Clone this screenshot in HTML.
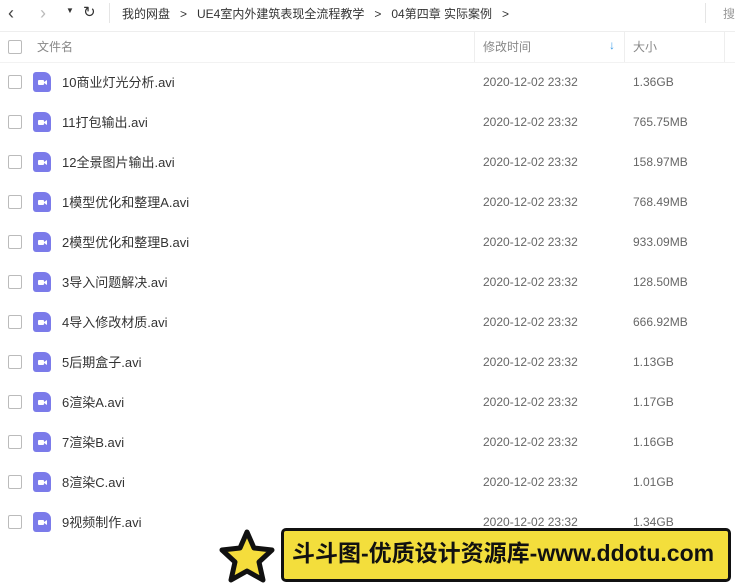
<!DOCTYPE html>
<html><head><meta charset="utf-8"><style>
body{margin:0;width:735px;height:585px;overflow:hidden;background:#fff;font-family:"Liberation Sans","Noto Sans CJK SC",sans-serif;font-size:12px;color:#333;position:relative}
.a{position:absolute;white-space:nowrap}
.cb{position:absolute;left:8px;width:12px;height:12px;border:1px solid #bbb;border-radius:2px;background:#fff}
.ic{position:absolute;left:33px;width:18px;height:20px;background:#7b7bea;border-radius:3px 7px 3px 3px}
.ic:after{content:"";position:absolute;left:5px;top:8px;width:6px;height:5px;background:#fff;border-radius:1px}
.ic:before{content:"";position:absolute;left:11px;top:8px;border-right:3px solid #fff;border-top:2px solid transparent;border-bottom:2px solid transparent;height:1px}
.g{color:#666}
</style></head><body>
<div class="a" style="left:8px;top:3px;font-size:18px;color:#444">‹</div>
<div class="a" style="left:40px;top:3px;font-size:18px;color:#bbb">›</div>
<div class="a" style="left:66px;top:6px;font-size:8px;color:#333">▼</div>
<div class="a" style="left:83px;top:3px;font-size:15px;color:#333">↻</div>
<div class="a" style="left:109px;top:3px;width:1px;height:20px;background:#e5e5e5"></div>
<div class="a" style="left:122px;top:5px;color:#333">我的网盘 &nbsp;&nbsp;&gt; &nbsp;&nbsp;UE4室内外建筑表现全流程教学 &nbsp;&nbsp;&gt; &nbsp;&nbsp;04第四章 实际案例 &nbsp;&nbsp;&gt;</div>
<div class="a" style="left:705px;top:3px;width:1px;height:20px;background:#e5e5e5"></div>
<div class="a" style="left:723px;top:5px;color:#999">搜</div>
<div class="a" style="left:0;top:31px;width:735px;height:1px;background:#eee"></div>
<div class="cb" style="top:40px"></div>
<div class="a g" style="left:37px;top:38px;color:#888">文件名</div>
<div class="a" style="left:474px;top:32px;width:1px;height:30px;background:#eee"></div>
<div class="a" style="left:483px;top:38px;color:#888">修改时间</div>
<div class="a" style="left:609px;top:38px;color:#3b9de8;font-weight:bold">↓</div>
<div class="a" style="left:624px;top:32px;width:1px;height:30px;background:#eee"></div>
<div class="a" style="left:633px;top:38px;color:#888">大小</div>
<div class="a" style="left:724px;top:32px;width:1px;height:30px;background:#eee"></div>
<div class="a" style="left:0;top:62px;width:735px;height:1px;background:#f2f2f2"></div>
<div id="rows"></div>
<script>
var d=[["10商业灯光分析.avi","1.36GB"],["11打包输出.avi","765.75MB"],["12全景图片输出.avi","158.97MB"],["1模型优化和整理A.avi","768.49MB"],["2模型优化和整理B.avi","933.09MB"],["3导入问题解决.avi","128.50MB"],["4导入修改材质.avi","666.92MB"],["5后期盒子.avi","1.13GB"],["6渲染A.avi","1.17GB"],["7渲染B.avi","1.16GB"],["8渲染C.avi","1.01GB"],["9视频制作.avi","1.34GB"]];
var h="";d.forEach(function(r,i){var y=82+i*40;
h+='<div class="cb" style="top:'+(y-7)+'px"></div><div class="ic" style="top:'+(y-10)+'px"></div><div class="a" style="left:62px;top:'+(y-10)+'px;font-size:13px">'+r[0]+'</div><div class="a g" style="left:483px;top:'+(y-7)+'px">2020-12-02 23:32</div><div class="a g" style="left:633px;top:'+(y-7)+'px">'+r[1]+'</div>';});
document.getElementById("rows").innerHTML=h;
</script>
<svg class="a" style="left:216px;top:528px" width="62" height="57" viewBox="0 0 62 57"><path d="M31 4 L38 20 L56 22 L43 34 L47 52 L31 43 L15 52 L19 34 L6 22 L24 20 Z" fill="#f5dd3c" stroke="#111" stroke-width="5" stroke-linejoin="round"/></svg>
<div class="a" style="left:281px;top:528px;width:444px;height:48px;background:#f3de3c;border:3px solid #111;border-radius:5px;overflow:hidden"></div>
<div class="a" style="left:292px;top:538px;font-size:23px;font-weight:bold;color:#111;line-height:30px">斗斗图-优质设计资源库-www.ddotu.com</div>
</body></html>
